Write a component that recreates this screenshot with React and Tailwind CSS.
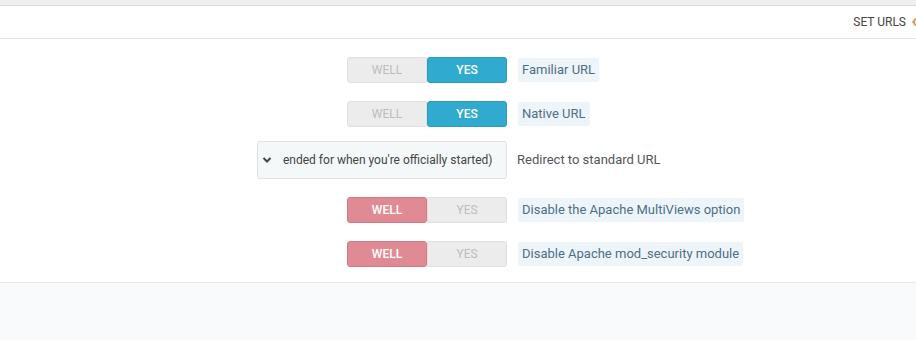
import React from "react";

const Toggle = ({ value }) => {
  const yes = value === "yes";
  return (
    <div className="flex h-[26px] w-[160px] text-[12px] uppercase">
      <div
        className={
          yes
            ? "flex w-[80px] items-center justify-center rounded-l-[3px] border border-[#e0e0e0] bg-[#ececec] font-normal text-[#bdbdbd]"
            : "flex w-[80px] items-center justify-center rounded-[3px] border border-[#d27a83] bg-[#e08b93] font-medium text-white"
        }
      >
        WELL
      </div>
      <div
        className={
          yes
            ? "flex w-[80px] items-center justify-center rounded-[3px] border border-[#2a9bbd] bg-[#30aacf] font-medium text-white"
            : "flex w-[80px] items-center justify-center rounded-r-[3px] border border-[#e0e0e0] bg-[#ececec] font-normal text-[#bdbdbd]"
        }
      >
        YES
      </div>
    </div>
  );
};

const Label = ({ children }) => (
  <span className="ml-[11px] rounded-[2px] bg-[#edf5fa] px-[4px] py-[3px] text-[13px] leading-[18px] text-[#4d6f88]">
    {children}
  </span>
);

export default function App() {
  return (
    <div className="flex h-[340px] w-[916px] flex-col overflow-hidden bg-[#f9fafc] font-['Roboto',sans-serif]">
      <div className="h-[6px] border-b border-[#d9d9d9] bg-[#eeeff1]" />
      <div className="flex h-[33px] items-center justify-end border-b border-[#e8e8e8] bg-white">
        <span className="text-[12px] text-[#444]">SET URLS</span>
        <svg width="10" height="10" viewBox="0 0 10 10" className="ml-[6px] mr-[-6px] shrink-0">
          <circle cx="5" cy="5" r="3" fill="none" stroke="#c9a45a" strokeWidth="2" />
          <path d="M5 0 V2 M5 8 V10 M0 5 H2 M8 5 H10" stroke="#c9a45a" strokeWidth="1.5" />
        </svg>
      </div>
      <div className="flex flex-col items-start border-b border-[#e6e9ed] bg-white pb-[15px] pl-[257px] pt-[18px]">
        <div className="flex items-center pl-[90px]">
          <Toggle value="yes" />
          <Label>Familiar URL</Label>
        </div>
        <div className="mt-[18px] flex items-center pl-[90px]">
          <Toggle value="yes" />
          <Label>Native URL</Label>
        </div>
        <div className="mt-[14px] flex items-center">
          <div className="flex h-[38px] w-[250px] items-center overflow-hidden rounded-[3px] border border-[#dfe3e6] bg-[#f5f8f9]">
            <svg width="10" height="10" viewBox="0 0 10 10" className="ml-[4px] shrink-0">
              <path d="M1.5 3 L5 6.5 L8.5 3" fill="none" stroke="#444" strokeWidth="2" />
            </svg>
            <span className="ml-[11px] whitespace-nowrap text-[12px] text-[#444]">
              ended for when you're officially started)
            </span>
          </div>
          <span className="ml-[10px] text-[13px] text-[#555]">Redirect to standard URL</span>
        </div>
        <div className="mt-[18px] flex items-center pl-[90px]">
          <Toggle value="well" />
          <Label>Disable the Apache MultiViews option</Label>
        </div>
        <div className="mt-[18px] flex items-center pl-[90px]">
          <Toggle value="well" />
          <Label>Disable Apache mod_security module</Label>
        </div>
      </div>
    </div>
  );
}
